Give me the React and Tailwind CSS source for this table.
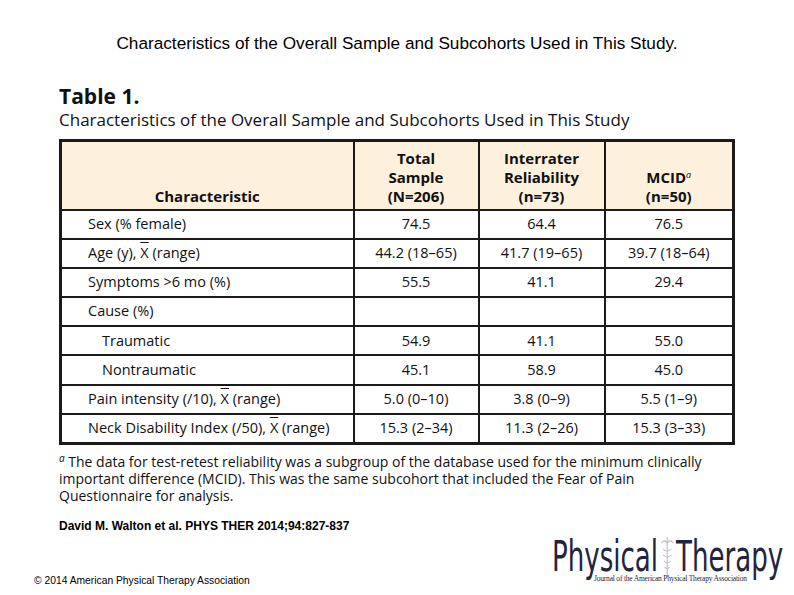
import React from "react";

const rows = [
  { label: "Sex (% female)", total: "74.5", inter: "64.4", mcid: "76.5" },
  { label: <>Age (y), <span className="overline">X</span> (range)</>, total: "44.2 (18–65)", inter: "41.7 (19–65)", mcid: "39.7 (18–64)" },
  { label: "Symptoms >6 mo (%)", total: "55.5", inter: "41.1", mcid: "29.4" },
  { label: "Cause (%)", total: "", inter: "", mcid: "" },
  { label: "Traumatic", indent: true, total: "54.9", inter: "41.1", mcid: "55.0" },
  { label: "Nontraumatic", indent: true, total: "45.1", inter: "58.9", mcid: "45.0" },
  { label: <>Pain intensity (/10), <span className="overline">X</span> (range)</>, total: "5.0 (0–10)", inter: "3.8 (0–9)", mcid: "5.5 (1–9)" },
  { label: <>Neck Disability Index (/50), <span className="overline">X</span> (range)</>, total: "15.3 (2–34)", inter: "11.3 (2–26)", mcid: "15.3 (3–33)" },
];

const Caduceus = () => (
  <svg width="22" height="44" viewBox="0 0 22 44" className="mx-[2px]">
    <line x1="11" y1="2" x2="11" y2="42" stroke="#b8b8c4" strokeWidth="1.5" />
    <path d="M2 8 Q7 4 11 8 Q15 4 20 8" fill="none" stroke="#c4c4cc" strokeWidth="1.2" />
    <path d="M5 14 Q11 18 17 14 M5 20 Q11 24 17 20 M6 26 Q11 30 16 26 M7 32 Q11 35 15 32" fill="none" stroke="#c4c4cc" strokeWidth="1.2" />
  </svg>
);

export default function App() {
  return (
    <div className="w-[794px] h-[595px] bg-white relative overflow-hidden">
      <div className="pt-[32px] text-center text-[17.2px] leading-[22px] text-black font-['Liberation_Sans',Arial,sans-serif]">
        Characteristics of the Overall Sample and Subcohorts Used in This Study.
      </div>

      <div className="pl-[59px] pt-[29px] font-['Open_Sans','Noto_Sans',sans-serif] text-[#111]">
        <div className="text-[21px] font-bold leading-[26px]">Table 1.</div>
        <div className="text-[17px] leading-[22px]">Characteristics of the Overall Sample and Subcohorts Used in This Study</div>

        <table className="mt-[8px] w-[676px] border-collapse border-[3px] border-[#1a1a1a] text-[14.5px] leading-none">
          <thead>
            <tr className="bg-[#fdf0dc] h-[69px] font-bold text-[15px]">
              <th className="w-[293px] border-2 border-[#1a1a1a] align-bottom pb-[5px] font-bold">Characteristic</th>
              <th className="w-[125px] border-2 border-[#1a1a1a] align-bottom pb-[3px] font-bold leading-[19px]">Total<br />Sample<br />(N=206)</th>
              <th className="w-[126px] border-2 border-[#1a1a1a] align-bottom pb-[3px] font-bold leading-[19px]">Interrater<br />Reliability<br />(n=73)</th>
              <th className="border-2 border-[#1a1a1a] align-bottom pb-[3px] font-bold leading-[19px]">MCID<sup className="italic font-normal text-[9px]">a</sup><br />(n=50)</th>
            </tr>
          </thead>
          <tbody>
            {rows.map((r, i) => (
              <tr key={i} className="h-[29.2px]">
                <td className={`border-2 border-[#1a1a1a] ${r.indent ? "pl-[40px]" : "pl-[26px]"}`}>{r.label}</td>
                <td className="border-2 border-[#1a1a1a] text-center">{r.total}</td>
                <td className="border-2 border-[#1a1a1a] text-center">{r.inter}</td>
                <td className="border-2 border-[#1a1a1a] text-center">{r.mcid}</td>
              </tr>
            ))}
          </tbody>
        </table>

        <div className="mt-[8px] w-[655px] text-[14px] leading-[17px]">
          <sup className="italic text-[10px] leading-none">a</sup> The data for test-retest reliability was a subgroup of the database used for the minimum clinically important difference (MCID). This was the same subcohort that included the Fear of Pain Questionnaire for analysis.
        </div>
      </div>

      <div className="pl-[59px] mt-[13px] text-[12px] font-bold font-['Liberation_Sans',Arial,sans-serif] text-black">
        David M. Walton et al. PHYS THER 2014;94:827-837
      </div>

      <div className="absolute left-[34px] top-[573px] text-[10.3px] font-['Liberation_Sans',Arial,sans-serif] text-black">
        © 2014 American Physical Therapy Association
      </div>

      <div className="absolute left-[552px] top-[535px] text-[#23233f]">
        <div className="flex items-center font-['DejaVu_Sans_Condensed','Liberation_Sans_Narrow',sans-serif] text-[42px] leading-[44px] scale-x-[0.69] origin-left">
          <span>Physical</span>
          <Caduceus />
          <span>Therapy</span>
        </div>
      </div>
      <div className="absolute left-[594px] top-[573px] text-[7.5px] font-['Liberation_Serif',serif] text-[#23233f] tracking-[-0.2px]">
        Journal of the American Physical Therapy Association
      </div>
    </div>
  );
}
